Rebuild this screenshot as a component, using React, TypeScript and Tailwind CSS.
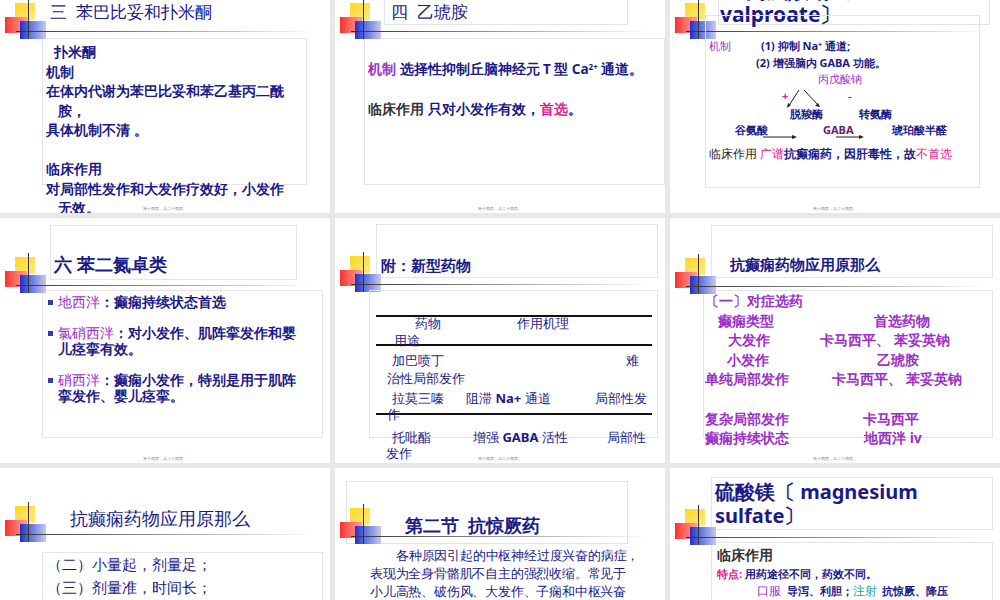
import React from "react";

const NAVY = "text-[#1a1a88]";
const PURPLE = "text-[#9b30c8]";
const PINK = "text-[#e0208c]";

const Logo = ({ top = 35 }: { top?: number }) => (
  <div className="absolute left-[5px] w-[320px] h-[45px]" style={{ top }}>
    <div className="absolute left-[10px] top-0 w-[20px] h-[17px] bg-gradient-to-br from-[#ffd800] to-[#ffe97a]" />
    <div className="absolute left-0 top-[14px] w-[22px] h-[16px] bg-gradient-to-r from-[#ff2a2a] to-[#ff9a9a]" />
    <div className="absolute left-[15px] top-[18px] w-[26px] h-[18px] bg-gradient-to-r from-[#2a2ac8] to-[#c8c8f0]" />
    <div className="absolute left-[23px] -top-[4px] w-[1px] h-[40px] bg-[#333]" />
    <div className="absolute left-[11px] top-[28px] w-[300px] h-[1px] bg-gradient-to-r from-[#333] via-[#999] to-transparent" />
  </div>
);

const Footer = () => (
  <div className="absolute left-0 right-0 top-[238px] text-center text-[4px] text-[#777]">第十四页，共二十四页。</div>
);

const Slide = ({ children, logoTop }: { children: React.ReactNode; logoTop?: number }) => (
  <div className="relative w-[330px] h-[245px] bg-white overflow-hidden font-['Noto_Sans_CJK_SC',sans-serif]">
    <Logo top={logoTop} />
    {children}
    <Footer />
  </div>
);

const Box = ({ className, children }: { className: string; children?: React.ReactNode }) => (
  <div className={"border border-[#e4e4e4] " + className}>{children}</div>
);

export default function App() {
  return (
    <div className="w-[1000px] h-[600px] overflow-hidden bg-[#e8e8e8]">
      <div className="grid grid-cols-[330px_330px_330px] auto-rows-[245px] gap-x-[5px] gap-y-[5px] -mt-[32px]">
        {/* row 1 */}
        <Slide>
          <div className={`ml-[50px] mt-[32px] text-[17px] leading-[24px] ${NAVY}`}>三&nbsp; 苯巴比妥和扑米酮</div>
          <Box className="ml-[42px] mt-[14px] w-[265px] h-[147px]">
            <div className={`pl-[3px] pt-[4px] text-[13.5px] leading-[19.5px] font-bold ${NAVY} w-[260px]`}>
              <div className="pl-[8px]">扑米酮</div>
              <div>机制</div>
              <div>在体内代谢为苯巴比妥和苯乙基丙二酰</div>
              <div className="pl-[12px]">胺，</div>
              <div>具体机制不清 。</div>
              <div>&nbsp;</div>
              <div>临床作用</div>
              <div>对局部性发作和大发作疗效好，小发作</div>
              <div className="pl-[12px]">无效。</div>
            </div>
          </Box>
        </Slide>
        <Slide>
          <Box className="ml-[49px] mt-[0px] w-[244px] h-[57px] flex items-end">
            <div className={`pl-[6px] pb-[0px] text-[17px] leading-[24px] ${NAVY}`}>四&nbsp; 乙琥胺</div>
          </Box>
          <Box className="ml-[29px] mt-[13px] w-[301px] h-[147px]">
            <div className="pl-[3px] pt-[20px] text-[13.5px] leading-[20px] font-bold whitespace-nowrap">
              <div className={NAVY}>
                <span className={PURPLE}>机制</span> 选择性抑制丘脑神经元 T 型 Ca<sup className="text-[8px]">2+</sup> 通道。
              </div>
              <div className={`mt-[20px] ${NAVY}`}>
                <span className="text-[#333]">临床作用</span> 只对小发作有效，<span className={PINK}>首选</span>。
              </div>
            </div>
          </Box>
        </Slide>
        <Slide>
          <Box className="ml-[48px] -mt-[2px] w-[272px] h-[59px] flex flex-col justify-end">
            <div className={`pl-[1px] -mb-[2px] text-[21px] leading-[24px] font-bold ${NAVY}`}>
              <div>三 丙戊酸钠〔</div>
              <div>valproate〕</div>
            </div>
          </Box>
          <Box className="relative ml-[35px] -mt-[10px] w-[275px] h-[173px]">
            <div className={`absolute inset-0 text-[11px] leading-[14px] font-bold ${NAVY} whitespace-nowrap`}>
              <span className={`absolute left-[3px] top-[23px] font-normal ${PURPLE}`}>机制</span>
              <span className="absolute left-[55px] top-[23px]">(1) 抑制 Na<sup className="text-[7px]">+</sup> 通道;</span>
              <span className="absolute left-[50px] top-[40px]">(2) 增强脑内 GABA 功能。</span>
              <span className={`absolute left-[112px] top-[56px] font-normal ${PURPLE}`}>丙戊酸钠</span>
              <span className={`absolute left-[76px] top-[73px] ${PINK}`}>+</span>
              <span className="absolute left-[142px] top-[73px] font-normal">-</span>
              <svg className="absolute left-[80px] top-[73px]" width="60" height="20" viewBox="0 0 60 20">
                <line x1="13" y1="1" x2="2" y2="18" stroke="#222" strokeWidth="1" />
                <path d="M1 19 L2 14 L5 16 Z" fill="#222" />
                <line x1="18" y1="1" x2="33" y2="17" stroke="#222" strokeWidth="1" />
                <path d="M34 18 L29 17 L32 14 Z" fill="#222" />
              </svg>
              <span className="absolute left-[84px] top-[91px]">脱羧酶</span>
              <span className="absolute left-[153px] top-[91px]">转氨酶</span>
              <span className="absolute left-[29px] top-[107px]">谷氨酸</span>
              <span className="absolute left-[117px] top-[107px] text-[#6a1b6a]">GABA</span>
              <span className="absolute left-[186px] top-[107px]">琥珀酸半醛</span>
              <svg className="absolute left-[57px] top-[118px]" width="120" height="6" viewBox="0 0 120 6">
                <line x1="0" y1="3" x2="32" y2="3" stroke="#222" />
                <path d="M34 3 L29 1 L29 5 Z" fill="#222" />
                <line x1="73" y1="3" x2="99" y2="3" stroke="#222" />
                <path d="M101 3 L96 1 L96 5 Z" fill="#222" />
              </svg>
              <span className="absolute left-[3px] top-[131px] text-[12px]">
                <span className="font-normal text-[#222]">临床作用</span> <span className={`font-normal ${PINK}`}>广谱</span>抗癫痫药，因肝毒性，故<span className={`font-normal ${PINK}`}>不首选</span>
              </span>
            </div>
          </Box>
        </Slide>

        {/* row 2 */}
        <Slide logoTop={39}>
          <Box className="ml-[50px] mt-[7px] w-[247px] h-[55px] flex items-end">
            <div className={`pl-[3px] pb-[3px] text-[18px] leading-[24px] font-bold ${NAVY}`}>六 苯二氮卓类</div>
          </Box>
          <Box className="ml-[42px] mt-[10px] w-[281px] h-[148px]">
            <div className={`pt-[3px] pl-[5px] text-[13.5px] leading-[16.5px] font-bold ${NAVY}`}>
              {[
                ["地西泮", "：癫痫持续状态首选", ""],
                ["氯硝西泮", "：对小发作、肌阵挛发作和婴", "儿痉挛有效。"],
                ["硝西泮", "：癫痫小发作，特别是用于肌阵", "挛发作、婴儿痉挛。"],
              ].map(([a, b, c], i) => (
                <div key={i} className="flex gap-[5px] mb-[14px]">
                  <div className="w-[5px] h-[5px] bg-[#3a3aa8] mt-[6px] shrink-0" />
                  <div>
                    <div><span className={`font-normal ${PURPLE}`}>{a}</span>{b}</div>
                    {c && <div>{c}</div>}
                  </div>
                </div>
              ))}
            </div>
          </Box>
        </Slide>
        <Slide logoTop={38}>
          <Box className="ml-[41px] mt-[6px] w-[282px] h-[54px] flex items-end">
            <div className={`pl-[4px] pb-[1px] text-[15px] leading-[22px] font-bold ${NAVY}`}>附：新型药物</div>
          </Box>
          <Box className="relative ml-[34px] mt-[12px] w-[289px] h-[148px]">
            <div className={`absolute inset-0 text-[13px] leading-[16px] font-medium ${NAVY} whitespace-nowrap`}>
              <div className="absolute left-[6px] top-[24px] w-[276px] h-[2px] bg-[#111]" />
              <div className="absolute left-[6px] top-[53px] w-[276px] h-[2px] bg-[#111]" />
              <div className="absolute left-[6px] top-[122px] w-[276px] h-[2px] bg-[#111]" />
              <span className="absolute left-[45px] top-[24px]">药物</span>
              <span className="absolute left-[147px] top-[24px]">作用机理</span>
              <span className="absolute left-[24px] top-[41px]">用途</span>
              <span className="absolute left-[22px] top-[61px]">加巴喷丁</span>
              <span className="absolute left-[256px] top-[61px]">难</span>
              <span className="absolute left-[17px] top-[79px]">治性局部发作</span>
              <span className="absolute left-[22px] top-[99px]">拉莫三嗪</span>
              <span className="absolute left-[96px] top-[99px]">阻滞 <b>Na+</b> 通道</span>
              <span className="absolute left-[225px] top-[99px]">局部性发</span>
              <span className="absolute left-[17px] top-[115px]">作</span>
              <span className="absolute left-[22px] top-[138px]">托吡酯</span>
              <span className="absolute left-[103px] top-[138px]">增强 <b>GABA</b> 活性</span>
              <span className="absolute left-[237px] top-[138px]">局部性</span>
            </div>
          </Box>
          <div className={`absolute left-[51px] top-[227px] text-[13px] leading-[16px] font-medium ${NAVY}`}>发作</div>
        </Slide>
        <Slide logoTop={40}>
          <Box className="ml-[41px] mt-[7px] w-[282px] h-[53px] flex items-end">
            <div className={`pl-[18px] pb-[2px] text-[15px] leading-[22px] font-bold ${NAVY}`}>抗癫痫药物应用原那么</div>
          </Box>
          <Box className="ml-[33px] mt-[12px] w-[290px] h-[148px]">
            <div className={`pl-[1px] text-[14px] leading-[19.6px] font-bold ${PURPLE} whitespace-nowrap`}>
              <div>〔一〕对症选药</div>
              {[
                ["pl-[13px]", "癫痫类型", "pl-[9px]", "首选药物", "w-[160px]"],
                ["pl-[23px]", "大发作", "", "卡马西平、 苯妥英钠", "w-[115px]"],
                ["pl-[22px]", "小发作", "pl-[10px]", "乙琥胺", "w-[162px]"],
                ["", "单纯局部发作", "", "卡马西平、 苯妥英钠", "w-[127px]"],
                ["", "", "", "", "w-[10px]"],
                ["", "复杂局部发作", "", "卡马西平", "w-[158px]"],
                ["", "癫痫持续状态", "", "地西泮  iv", "w-[159px]"],
              ].map(([p1, a, p2, b, w], i) => (
                <div key={i} className="flex h-[19.6px]">
                  <div className={`${w} ${p1}`}>{a}</div>
                  <div className={p2}>{b}</div>
                </div>
              ))}
            </div>
          </Box>
        </Slide>

        {/* row 3 */}
        <Slide logoTop={38}>
          <div className={`ml-[70px] mt-[38px] text-[18px] leading-[24px] ${NAVY}`}>抗癫痫药物应用原那么</div>
          <Box className="ml-[42px] mt-[22px] w-[281px] h-[148px]">
            <div className={`pl-[4px] pt-[0px] text-[15px] leading-[23px] ${NAVY}`}>
              <div>（二）小量起，剂量足；</div>
              <div>（三）剂量准，时间长；</div>
            </div>
          </Box>
        </Slide>
        <Slide logoTop={40}>
          <Box className="ml-[11px] mt-[13px] w-[282px] h-[63px] flex items-end">
            <div className={`pl-[58px] pb-[6px] text-[18px] leading-[24px] font-bold ${NAVY}`}>第二节&nbsp; 抗惊厥药</div>
          </Box>
          <div className={`ml-[35px] mt-[2px] w-[295px] text-[13px] leading-[18px] whitespace-nowrap tracking-[-0.2px] ${NAVY}`}>
            <div className="pl-[26px]">各种原因引起的中枢神经过度兴奋的病症，</div>
            <div>表现为全身骨骼肌不自主的强烈收缩。常见于</div>
            <div>小儿高热、破伤风、大发作、子痫和中枢兴奋</div>
            <div>药中毒。</div>
          </div>
        </Slide>
        <Slide logoTop={41}>
          <Box className="ml-[41px] mt-[9px] w-[282px] h-[53px] flex items-center">
            <div className={`pl-[3px] text-[20px] leading-[24px] font-bold ${NAVY}`}>
              <div>硫酸镁〔 magnesium</div>
              <div>sulfate〕</div>
            </div>
          </Box>
          <Box className="ml-[41px] mt-[12px] w-[282px] h-[148px]">
            <div className="pl-[5px] pt-[2px] whitespace-nowrap">
              <div className="text-[14px] leading-[20px] font-bold text-[#333]">临床作用</div>
              <div className={`text-[11px] leading-[17px] font-bold ${NAVY}`}>
                <span className={PINK}>特点:</span> 用药途径不同，药效不同。
              </div>
              <div className={`pl-[40px] text-[11px] leading-[17px] font-bold ${NAVY}`}>
                <span className={`font-normal ${PURPLE} text-[12px]`}>口服</span>&nbsp; 导泻、利胆；<span className="font-normal text-[#19a0a0] text-[12px]">注射</span>&nbsp; 抗惊厥、降压
              </div>
            </div>
          </Box>
        </Slide>
      </div>
    </div>
  );
}
